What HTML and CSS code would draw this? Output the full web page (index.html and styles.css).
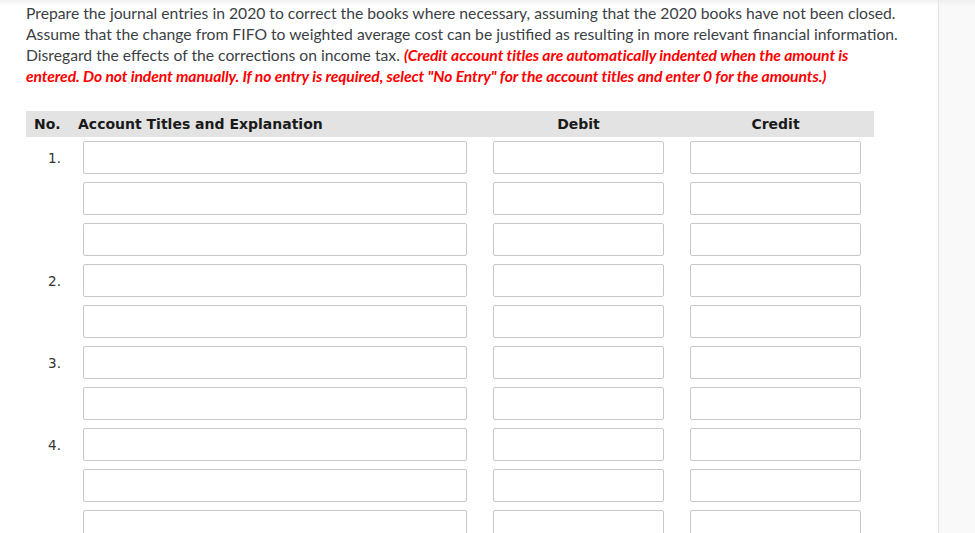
FILE: index.html
```html
<!DOCTYPE html>
<html>
<head>
<meta charset="utf-8">
<link rel="stylesheet" href="styles.css">
</head>
<body>
<div class="page">
  <main class="main">
    <p class="prompt">Prepare the journal entries in 2020 to correct the books where necessary, assuming that the 2020 books have not been closed.<br>Assume that the change from FIFO to weighted average cost can be justified as resulting in more relevant financial information.<br>Disregard the effects of the corrections on income tax. <em class="note">(Credit account titles are automatically indented when the amount is<br>entered. Do not indent manually. If no entry is required, select "No Entry" for the account titles and enter 0 for the amounts.)</em></p>

    <div class="journal">
      <div class="head">
        <div class="h-no">No.</div>
        <div class="h-acct">Account Titles and Explanation</div>
        <div class="h-amt">Debit</div>
        <div class="h-amt">Credit</div>
      </div>

      <div class="rows">
        <div class="row"><div class="num">1.</div><input class="acct"><input class="amt"><input class="amt"></div>
        <div class="row"><div class="num"></div><input class="acct"><input class="amt"><input class="amt"></div>
        <div class="row"><div class="num"></div><input class="acct"><input class="amt"><input class="amt"></div>
        <div class="row"><div class="num">2.</div><input class="acct"><input class="amt"><input class="amt"></div>
        <div class="row"><div class="num"></div><input class="acct"><input class="amt"><input class="amt"></div>
        <div class="row"><div class="num">3.</div><input class="acct"><input class="amt"><input class="amt"></div>
        <div class="row"><div class="num"></div><input class="acct"><input class="amt"><input class="amt"></div>
        <div class="row"><div class="num">4.</div><input class="acct"><input class="amt"><input class="amt"></div>
        <div class="row"><div class="num"></div><input class="acct"><input class="amt"><input class="amt"></div>
        <div class="row"><div class="num"></div><input class="acct"><input class="amt"><input class="amt"></div>
      </div>
    </div>
  </main>
  <aside class="side"></aside>
</div>
</body>
</html>
```

FILE: styles.css
```css
* { box-sizing: border-box; }
html, body {
  margin: 0;
  height: 100%;
  overflow: hidden;
  background: #fff;
}
.page {
  display: flex;
  height: 533px;
}
.main {
  flex: 1;
  padding: 3px 0 0 26px;
  background: linear-gradient(to bottom, #f1f1f1 0, #fff 6px);
}
.side {
  width: 37px;
  border-left: 1px solid #e2e2e2;
  background: linear-gradient(to bottom, #f0f0f0 0, #f9f9f9 6px);
}
.prompt {
  margin: 0;
  font-family: Lato, "Open Sans", sans-serif;
  font-size: 15.7px;
  line-height: 21px;
  color: #3b3f45;
  white-space: nowrap;
}
.note {
  color: #f00;
  font-style: italic;
  font-weight: bold;
  letter-spacing: -0.1px;
}
.journal {
  margin-top: 24px;
  width: 848px;
}
.head {
  display: flex;
  align-items: center;
  height: 26px;
  margin-bottom: 4px;
  background: #e3e3e3;
  font-family: "DejaVu Sans", Verdana, sans-serif;
  font-weight: bold;
  font-size: 14px;
  color: #1a1a1a;
}
.h-no { width: 52px; padding-left: 8px; }
.h-acct { width: 389px; }
.h-amt { width: 171px; margin-left: 26px; text-align: center; }
.rows {
  display: flex;
  flex-direction: column;
  gap: 8px;
}
.row {
  display: flex;
  align-items: center;
  height: 33px;
}
.num {
  width: 57px;
  padding-right: 22px;
  text-align: right;
  font-family: "DejaVu Sans", Verdana, sans-serif;
  font-size: 13.5px;
  color: #333;
}
.acct, .amt {
  height: 33px;
  margin: 0;
  border: 1px solid #c8c8c8;
  border-radius: 2px;
  background: #fff;
  padding: 0;
  flex: none;
}
.acct { width: 384px; }
.amt { width: 171px; margin-left: 26px; }
```
